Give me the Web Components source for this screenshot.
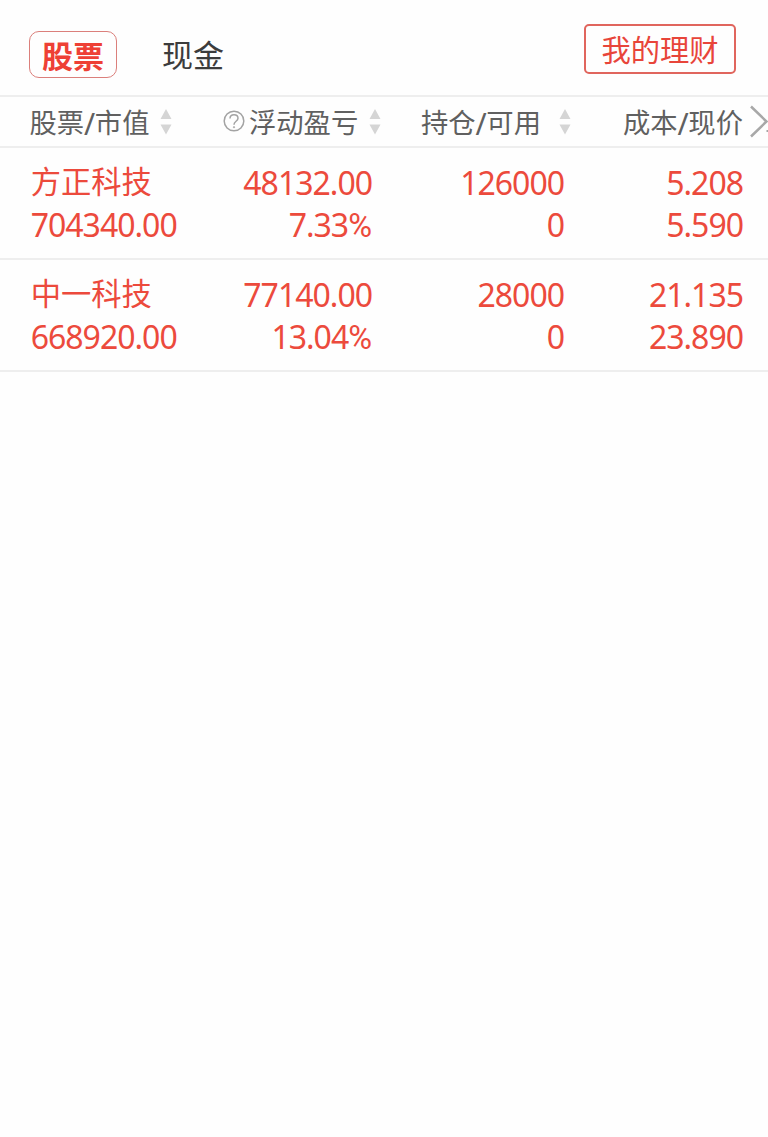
<!DOCTYPE html>
<html lang="zh-CN">
<head>
<meta charset="utf-8">
<title>持仓</title>
<style>
html{background:#fefefe}
body{margin:0;font-family:"Noto Sans CJK SC",sans-serif;overflow:hidden}
</style>
</head>
<body>
<holdings-page></holdings-page>
<script>
class BaseElement extends HTMLElement {
  connectedCallback() {
    if (!this.shadowRoot) this.attachShadow({mode: 'open'}).innerHTML = this.render();
  }
}

customElements.define('account-tabs', class extends BaseElement {
  render() {
    return `<style>
      :host{display:flex;height:95px;border-bottom:2px solid #eee;box-sizing:content-box;align-items:flex-start}
      div{box-sizing:border-box;white-space:nowrap}
      .on{margin:31px 0 0 29px;width:88px;height:47px;border:1px solid #db7f7b;border-radius:10px;color:#ee4035;font-size:31px;font-weight:700;line-height:45px;text-align:center}
      .tab{margin:31px 0 0 45px;color:#3c3c3c;font-size:31px;line-height:46px}
      .btn{margin:24px 32px 0 auto;width:152px;height:50px;border:2px solid #e0655d;border-radius:5px;color:#e8453a;font-size:29.3px;line-height:45px;text-align:center}
    </style>
    <div class="on">股票</div><div class="tab">现金</div><div class="btn">我的理财</div>`;
  }
});

customElements.define('sort-arrows', class extends BaseElement {
  render() {
    return `<style>:host{display:block;width:12px;height:26px}svg{display:block}</style>
    <svg width="12" height="26" viewBox="0 0 12 26" fill="#d5d5d5"><path d="M6 0 11.500 10H.5zM.5 15.500h11L6 25.500z"/></svg>`;
  }
});

customElements.define('column-heads', class extends BaseElement {
  render() {
    return `<style>
      :host{display:grid;grid-template-columns:223px 198px 202px 145px;height:49px;border-bottom:2px solid #eee;color:#606060;font-size:27.3px;line-height:49px;overflow:hidden}
      .c{display:flex;white-space:nowrap;align-items:flex-start}
      .c>span{display:block;height:49px}
      i{font:30px/0 "Noto Sans",sans-serif;letter-spacing:-.4px;vertical-align:-2px}
      .first{padding-left:29.500px}
      sort-arrows{margin-top:12px;flex:none}
      .help{flex:none;margin:13px 4px 0 0}
      .next{flex:none;margin:8px 0 0 7px}
    </style>
    <div class="c first"><span>股票<i>/</i>市值</span><sort-arrows style="margin-left:11px"></sort-arrows></div>
    <div class="c"><svg class="help" width="22" height="22" viewBox="0 0 22 22" fill="none" stroke="#a3a3a3" stroke-width="1.5"><circle cx="11" cy="11" r="9.8"/><path d="M7 8.500C7 6 8.800 4.700 11 4.700s4 1.300 4 3.500c0 1.500-1 2.400-2.200 3.300C11.600 12.400 11 13 11 14.700"/><circle cx="11" cy="17.200" r=".7" fill="#a3a3a3" stroke-width=".7"/></svg><span>浮动盈亏</span><sort-arrows style="margin-left:11px"></sort-arrows></div>
    <div class="c"><span>持仓<i>/</i>可用</span><sort-arrows style="margin-left:18px"></sort-arrows></div>
    <div class="c"><span>成本<i>/</i>现价</span><svg class="next" width="18" height="33" viewBox="0 0 18 33" fill="none" stroke="#a8a8a8" stroke-width="2.500"><path d="M1 1.500 16.500 16.500 1 31.500"/><path d="M16.500 26h1.500" stroke="#888" stroke-width="1.500"/></svg></div>`;
  }
});

customElements.define('stock-row', class extends BaseElement {
  render() {
    const a = n => this.getAttribute(n);
    return `<style>
      :host{display:grid;grid-template-columns:200px 172px 192px 179px;box-sizing:border-box;height:112px;padding-top:14px;border-bottom:2px solid #eee;color:#ec4a3c;font-family:"Noto Sans",sans-serif;font-size:32px;letter-spacing:-1px;line-height:42px;white-space:nowrap}
      div{text-align:right}
      .name{text-align:left;padding-left:30.700px}
      span{display:block}
      .title{font-family:"Noto Sans CJK SC",sans-serif;font-size:30.3px;letter-spacing:0;line-height:36px;height:42px}
      .pct{display:inline;font:32.500px/0 Roboto,sans-serif;letter-spacing:0}
    </style>
    <div class="name"><span class="title">${a('name')}</span><span>${a('value')}</span></div>
    <div><span>${a('profit')}</span><span>${a('rate')}<span class="pct">%</span></span></div>
    <div><span>${a('held')}</span><span>${a('free')}</span></div>
    <div><span>${a('cost')}</span><span>${a('price')}</span></div>`;
  }
});

customElements.define('holdings-page', class extends BaseElement {
  render() {
    return `<style>:host{display:block;width:768px;height:1137px;overflow:hidden;background:#fefefe}</style>
    <account-tabs></account-tabs>
    <column-heads></column-heads>
    <stock-row name="方正科技" value="704340.00" profit="48132.00" rate="7.33" held="126000" free="0" cost="5.208" price="5.590"></stock-row>
    <stock-row name="中一科技" value="668920.00" profit="77140.00" rate="13.04" held="28000" free="0" cost="21.135" price="23.890"></stock-row>`;
  }
});
</script>
</body>
</html>
